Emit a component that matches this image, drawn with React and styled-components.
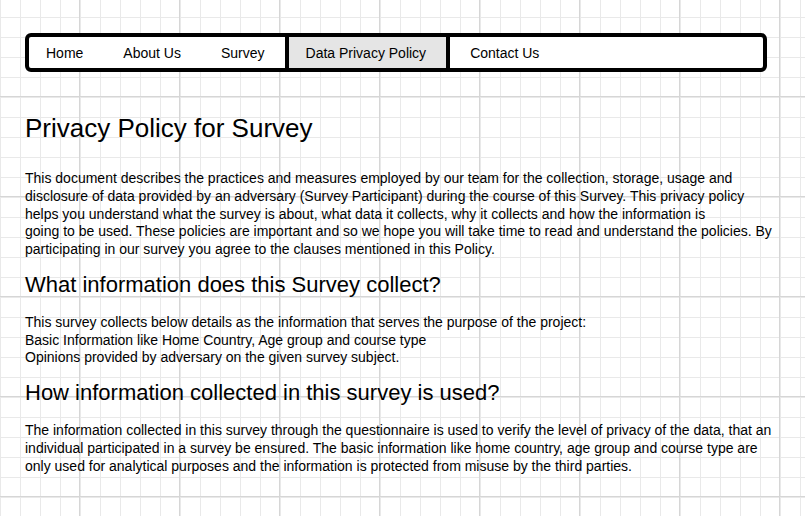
import React from "react";
import styled, { createGlobalStyle } from "styled-components";

const GlobalStyle = createGlobalStyle`
  html, body {
    margin: 0;
    padding: 0;
  }
  body {
    font-family: "Liberation Sans", Arial, sans-serif;
    color: #000;
    background-color: #fff;
    background-image:
      linear-gradient(to right, #d6d6d6 1px, transparent 1px),
      linear-gradient(to bottom, #d6d6d6 1px, transparent 1px),
      linear-gradient(to right, #e9e9e9 1px, transparent 1px),
      linear-gradient(to bottom, #e9e9e9 1px, transparent 1px);
    background-size: 100px 100px, 100px 100px, 20px 20px, 20px 20px;
    background-position: 79px 96px, 79px 96px, 0 17px, 0 17px;
    min-height: 516px;
  }
`;

const Page = styled.div`
  padding: 33px 25px 40px 25px;
`;

const Nav = styled.nav`
  box-sizing: border-box;
  width: 742px;
  height: 39px;
  border: 4px solid #000;
  border-radius: 6px;
  background: #fff;
  overflow: hidden;
`;

const NavList = styled.ul`
  list-style: none;
  margin: 0 0 0 -3px;
  padding: 0;
  display: flex;
  align-items: stretch;
  height: 100%;
`;

const NavItem = styled.li`
  display: flex;
  align-items: center;
  padding: 1px 20px 0 ${(p) => (p.$active ? "17px" : "20px")};
  font-size: 14px;
  color: #000;
  background: ${(p) => (p.$active ? "#e5e5e5" : "transparent")};
  border-left: ${(p) => (p.$active ? "4px solid #000" : "none")};
  border-right: ${(p) => (p.$active ? "4px solid #000" : "none")};
`;

const Title = styled.h1`
  font-size: 26px;
  font-weight: normal;
  margin: 41px 0 27px 0;
  line-height: 30px;
`;

const SubTitle = styled.h2`
  font-size: 22px;
  font-weight: normal;
  margin: 13px 0 17px 0;
  line-height: 25px;
`;

const Para = styled.p`
  font-size: 14px;
  line-height: 17.75px;
  margin: 0;
  width: 755px;
`;

const items = ["Home", "About Us", "Survey", "Data Privacy Policy", "Contact Us"];

export default function App() {
  return (
    <>
      <GlobalStyle />
      <Page>
        <Nav>
          <NavList>
            {items.map((it) => (
              <NavItem key={it} $active={it === "Data Privacy Policy"}>
                {it}
              </NavItem>
            ))}
          </NavList>
        </Nav>
        <Title>Privacy Policy for Survey</Title>
        <Para>
          This document describes the practices and measures employed by our team for the collection, storage, usage and
          disclosure of data provided by an adversary (Survey Participant) during the course of this Survey. This privacy
          policy helps you understand what the survey is about, what data it collects, why it collects and how the
          information is
          <br />
          going to be used. These policies are important and so we hope you will take time to read and understand the
          policies. By participating in our survey you agree to the clauses mentioned in this Policy.
        </Para>
        <SubTitle>What information does this Survey collect?</SubTitle>
        <Para>
          This survey collects below details as the information that serves the purpose of the project:
          <br />
          Basic Information like Home Country, Age group and course type
          <br />
          Opinions provided by adversary on the given survey subject.
        </Para>
        <SubTitle>How information collected in this survey is used?</SubTitle>
        <Para>
          The information collected in this survey through the questionnaire is used to verify the level of privacy of
          the data, that an individual participated in a survey be ensured. The basic information like home country, age
          group and course type are only used for analytical purposes and the information is protected from misuse by the
          third parties.
        </Para>
      </Page>
    </>
  );
}
